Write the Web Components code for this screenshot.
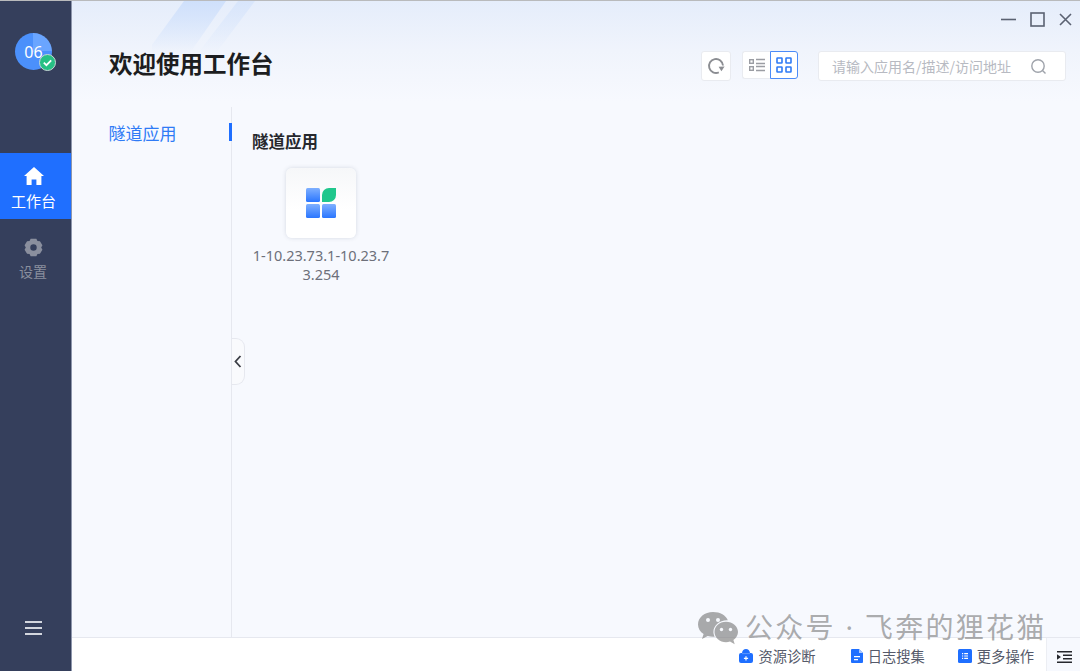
<!DOCTYPE html>
<html lang="zh">
<head>
<meta charset="utf-8">
<title>工作台</title>
<style>
	html,body{margin:0;height:100%;}
	body{font-family:"Noto Sans","Noto Sans CJK SC",sans-serif;overflow:hidden;}
</style>
</head>
<body>
<app-shell>
	<side-bar slot="side">
		<side-item active label="工作台">
			<svg viewBox="0 0 20 18" width="20" height="18"><path d="M10 0 L20 9 L17.4 9 L17.4 18 L12.4 18 L12.4 12.4 L7.6 12.4 L7.6 18 L2.6 18 L2.6 9 L0 9 Z" fill="#fff"/></svg>
		</side-item>
		<side-item label="设置">
			<svg viewBox="0 0 20 20" width="19" height="19"><path fill-rule="evenodd" d="M7 .8h6l1.2 2.3 2.6.2 2.6 4.4-1.3 2.3 1.3 2.3-2.6 4.4-2.6.2L13 19.2H7l-1.2-2.3-2.6-.2L.6 12.3 1.9 10 .6 7.7l2.6-4.4 2.6-.2zM10 6.6a3.4 3.4 0 1 0 0 6.8 3.4 3.4 0 0 0 0-6.8z" fill="#8a8f9e"/></svg>
		</side-item>
	</side-bar>
	<window-controls></window-controls>
	<work-header title-text="欢迎使用工作台"></work-header>
	<work-body>
		<nav-list slot="nav">隧道应用</nav-list>
		<app-section heading="隧道应用">
			<app-card>1-10.23.73.1-10.23.73.254</app-card>
		</app-section>
	</work-body>
	<status-bar>
		<status-link label="资源诊断">
			<svg viewBox="0 0 14 14" width="14" height="14"><path d="M3 4 C3.300 1.300 4.800 0 7 0 s3.700 1.300 4 4 H12 a2 2 0 0 1 2 2 v6 a2 2 0 0 1-2 2 H2 a2 2 0 0 1-2-2 V6 a2 2 0 0 1 2-2z" fill="#1f6fff"/><path d="M3 4.600h8" stroke="#6da2ff" stroke-width=".8"/><path d="M6.400 7.200h1.200v1.500h1.500v1.200H7.600v1.500H6.400V9.900H4.900V8.700h1.500z" fill="#fff"/></svg>
		</status-link>
		<status-link label="日志搜集" style="margin-left:35px">
			<svg viewBox="0 0 12 14" width="12" height="14"><path d="M1 0h7l4 4v9a1 1 0 0 1-1 1H1a1 1 0 0 1-1-1V1a1 1 0 0 1 1-1z" fill="#1f6fff"/><path d="M8 0l4 4H8z" fill="#a9c8ff"/><path d="M3 7h6v1.200H3zM3 10h4v1.200H3z" fill="#fff"/></svg>
		</status-link>
		<status-link label="更多操作" style="margin-left:33px">
			<svg viewBox="0 0 14 14" width="14" height="14"><rect width="14" height="14" rx="1.500" fill="#1f6fff"/><path d="M4 4h1.200v1.200H4zM6.200 4H10v1.200H6.200zM4 6.400h1.200v1.200H4zM6.200 6.400H10v1.200H6.200zM4 8.800h1.200V10H4zM6.200 8.800H10V10H6.200z" fill="#fff"/></svg>
		</status-link>
	</status-bar>
	<water-mark></water-mark>
</app-shell>

<script>
class AppShell extends HTMLElement{
	constructor(){
		super();
		const shadow = this.attachShadow({mode:'open'});
		shadow.innerHTML = `
		<style>
			:host{
				display:grid;
				grid-template-columns:72px 1fr;
				height:671px;
				width:1080px;
				position:relative;
				box-sizing:border-box;
				border-top:1px solid #b9babc;
				overflow:hidden;
			}
			.main{
				display:flex;
				flex-direction:column;
				min-width:0;
				position:relative;
				background:linear-gradient(180deg,#e5edfb 0,#f0f4fc 50px,#f7f9fe 100px,#f7f9fe 100%);
			}
			.streak{position:absolute;left:80px;top:0;}
		</style>
		<slot name="side"></slot>
		<div class="main">
			<svg class="streak" width="120" height="60" viewBox="0 0 120 60">
				<defs>
					<linearGradient id="fade" x1="0" y1="0" x2="0" y2="1">
						<stop offset="0" stop-color="#cfe0fb"/>
						<stop offset="1" stop-color="#cfe0fb" stop-opacity="0"/>
					</linearGradient>
				</defs>
				<polygon points="32,0 74,0 38,52 -6,52" fill="url(#fade)"/>
				<polygon points="86,0 103,0 64,52 46,52" fill="url(#fade)" opacity=".6"/>
			</svg>
			<slot></slot>
		</div>`;
	}
}
customElements.define('app-shell',AppShell);

class SideBar extends HTMLElement{
	constructor(){
		super();
		const shadow = this.attachShadow({mode:'open'});
		shadow.innerHTML = `
		<style>
			:host{
				display:flex;
				flex-direction:column;
				box-sizing:border-box;
				background:#353f5c;
				border-right:1px solid #8e96ac;
				padding-top:32px;
				height:670px;
			}
			.avatar{
				position:relative;
				width:37px;
				height:37px;
				margin:0 0 83px 15px;
				border-radius:50%;
				background:conic-gradient(#6aa5ff 0 25%,#4b90fb 25% 100%);
				color:#fff;
				font-size:16px;
				display:flex;
				align-items:center;
				justify-content:center;
			}
			.badge{position:absolute;right:-4px;bottom:-1px;}
			.menu{
				margin-top:auto;
				margin-bottom:36px;
				margin-left:25px;
				width:17px;
				display:flex;
				flex-direction:column;
				gap:4px;
			}
			.menu i{display:block;height:2px;background:#d3d6de;}
		</style>
		<div class="avatar"><span>06</span>
			<svg class="badge" width="17" height="17" viewBox="0 0 17 17">
				<circle cx="8.500" cy="8.500" r="8" fill="#27c084" stroke="#c9d6d6" stroke-width="1"/>
				<path d="M4.800 8.700l2.600 2.500 4.800-4.800" fill="none" stroke="#fff" stroke-width="1.800"/>
			</svg>
		</div>
		<slot></slot>
		<div class="menu"><i></i><i></i><i></i></div>`;
	}
}
customElements.define('side-bar',SideBar);

class SideItem extends HTMLElement{
	constructor(){
		super();
		const shadow = this.attachShadow({mode:'open'});
		shadow.innerHTML = `
		<style>
			:host{
				display:flex;
				flex-direction:column;
				align-items:center;
				box-sizing:border-box;
				height:66px;
				padding:18px 5px 0 0;
				color:#8a8f9e;
				font-size:14px;
				line-height:20px;
			}
			:host([active]){background:#1f6fff;color:#fff;font-size:15px;padding:13px 4px 0 0;}
			.icon{height:20px;display:flex;align-items:center;margin-bottom:5px;}
		</style>
		<div class="icon"><slot></slot></div>
		<div class="label"></div>`;
		shadow.querySelector('.label').textContent = this.getAttribute('label');
	}
}
customElements.define('side-item',SideItem);

class WindowControls extends HTMLElement{
	constructor(){
		super();
		const shadow = this.attachShadow({mode:'open'});
		shadow.innerHTML = `
		<style>
			:host{
				display:flex;
				justify-content:flex-end;
				align-items:center;
				gap:14px;
				height:36px;
				padding-right:8px;
				position:relative;
			}
			svg{display:block;}
		</style>
		<svg width="15" height="15" viewBox="0 0 15 15"><path d="M0 7.500h15" stroke="#5b6272" stroke-width="1.600"/></svg>
		<svg width="15" height="15" viewBox="0 0 15 15"><rect x="1" y="1" width="13" height="13" fill="none" stroke="#5b6272" stroke-width="1.600"/></svg>
		<svg width="13" height="15" viewBox="0 0 13 15"><path d="M1 2l11 11M12 2L1 13" stroke="#5b6272" stroke-width="1.600"/></svg>`;
	}
}
customElements.define('window-controls',WindowControls);

class WorkHeader extends HTMLElement{
	constructor(){
		super();
		const shadow = this.attachShadow({mode:'open'});
		shadow.innerHTML = `
		<style>
			:host{
				display:flex;
				align-items:flex-start;
				box-sizing:border-box;
				height:70px;
				padding:14px 14px 0 37px;
				position:relative;
			}
			h1{
				margin:-3px 0 0;
				flex:1;
				font-size:23.500px;
				line-height:30px;
				font-weight:700;
				color:#1c1d20;
				font-family:"Noto Sans CJK SC",sans-serif;
			}
			.btn{
				box-sizing:border-box;
				height:30px;
				background:#fff;
				border:1px solid #e9ebf0;
				border-radius:3px;
				display:flex;
				align-items:center;
				justify-content:center;
			}
			.refresh{width:30px;margin-right:11px;}
			.toggle{display:flex;margin-right:20px;height:28px;}
			.toggle div{
				box-sizing:border-box;
				width:28px;
				height:28px;
				background:#fff;
				border:1px solid #e9ebf0;
				display:flex;
				align-items:center;
				justify-content:center;
			}
			.toggle .list{border-radius:3px 0 0 3px;border-right:0;}
			.toggle .grid{border:1px solid #4b8bf8;border-radius:0 3px 3px 0;}
			.search{
				width:248px;
				justify-content:space-between;
				padding:0 19px 0 13px;
				font-size:14px;
				color:#b7bac2;
				font-family:"Noto Sans CJK SC",sans-serif;
			}
		</style>
		<h1></h1>
		<div class="btn refresh">
			<svg width="18" height="18" viewBox="0 0 18 18" fill="none"><path d="M16 8.500A7 7 0 1 0 11.800 15.400" stroke="#8b8d92" stroke-width="1.900"/><path d="M17.600 9.400l-6 .4 2.800 4.400z" fill="#8b8d92"/></svg>
		</div>
		<div class="toggle">
			<div class="list">
				<svg width="16" height="14" viewBox="0 0 16 14" fill="none" stroke="#9b9da3" stroke-width="1.400"><rect x=".7" y="1.700" width="3.600" height="3.600"/><rect x=".7" y="8.700" width="3.600" height="3.600"/><path d="M7 1.500h9M7 5.500h9M7 8.500h9M7 12.500h9"/></svg>
			</div>
			<div class="grid">
				<svg width="16" height="16" viewBox="0 0 16 16" fill="none" stroke="#2f7bf6" stroke-width="1.600"><rect x="1" y="1" width="5" height="5" rx=".5"/><rect x="10" y="1" width="5" height="5" rx=".5"/><rect x="1" y="10" width="5" height="5" rx=".5"/><rect x="10" y="10" width="5" height="5" rx=".5"/></svg>
			</div>
		</div>
		<div class="btn search">
			<span>请输入应用名/描述/访问地址</span>
			<svg width="15" height="15" viewBox="0 0 15 15" fill="none" stroke="#9fa3ab" stroke-width="1.400"><circle cx="7" cy="7" r="6.200"/><path d="M11.500 11.500l3 3"/></svg>
		</div>`;
		shadow.querySelector('h1').textContent = this.getAttribute('title-text');
	}
}
customElements.define('work-header',WorkHeader);

class WorkBody extends HTMLElement{
	constructor(){
		super();
		const shadow = this.attachShadow({mode:'open'});
		shadow.innerHTML = `
		<style>
			:host{
				display:flex;
				flex:1;
				min-height:0;
				position:relative;
			}
			.handle{
				position:absolute;
				left:160px;
				top:231px;
				width:13px;
				height:47px;
				box-sizing:border-box;
				background:#f9fafd;
				border:1px solid #e6e8ef;
				border-left:0;
				border-radius:0 9px 9px 0;
				display:flex;
				align-items:center;
				justify-content:center;
			}
		</style>
		<slot name="nav"></slot>
		<slot></slot>
		<div class="handle">
			<svg width="8" height="13" viewBox="0 0 8 13" fill="none"><path d="M6.500 1L1.500 6.500l5 5.500" stroke="#3a3d45" stroke-width="1.800"/></svg>
		</div>`;
	}
}
customElements.define('work-body',WorkBody);

class NavList extends HTMLElement{
	constructor(){
		super();
		const shadow = this.attachShadow({mode:'open'});
		shadow.innerHTML = `
		<style>
			:host{
				display:block;
				box-sizing:border-box;
				width:160px;
				flex:none;
				padding:16px 0 0 36.500px;
				border-right:1px solid #e6e8ef;
				position:relative;
				color:#2f7bf6;
				font-size:17px;
				line-height:20px;
				font-family:"Noto Sans CJK SC",sans-serif;
			}
			.bar{
				position:absolute;
				right:-1px;
				top:16px;
				width:3px;
				height:18px;
				background:#1f6fff;
			}
		</style>
		<slot></slot>
		<div class="bar"></div>`;
	}
}
customElements.define('nav-list',NavList);

class AppSection extends HTMLElement{
	constructor(){
		super();
		const shadow = this.attachShadow({mode:'open'});
		shadow.innerHTML = `
		<style>
			:host{
				display:block;
				padding:24px 0 0 19px;
			}
			h2{
				margin:0 0 17px;
				font-size:16.500px;
				line-height:20px;
				font-weight:700;
				color:#26282d;
				font-family:"Noto Sans CJK SC",sans-serif;
				padding-left:1px;
			}
		</style>
		<h2></h2>
		<slot></slot>`;
		shadow.querySelector('h2').textContent = this.getAttribute('heading');
	}
}
customElements.define('app-section',AppSection);

class AppCard extends HTMLElement{
	constructor(){
		super();
		const shadow = this.attachShadow({mode:'open'});
		shadow.innerHTML = `
		<style>
			:host{
				display:flex;
				flex-direction:column;
				align-items:center;
				width:140px;
			}
			.tile{
				width:70px;
				height:70px;
				border-radius:6px;
				background:linear-gradient(180deg,#f6f7f9,#fff 60%);
				box-shadow:0 0 4px rgba(60,70,100,.18);
				display:flex;
				align-items:center;
				justify-content:center;
			}
			.name{
				margin-top:8px;
				width:140px;
				text-align:center;
				word-break:break-all;
				font-size:14.500px;
				line-height:19px;
				color:#6d707a;
			}
		</style>
		<div class="tile">
			<svg width="30" height="30" viewBox="0 0 30 30">
				<defs>
					<linearGradient id="blue" x1="0" y1="0" x2="0" y2="1">
						<stop offset="0" stop-color="#7fb0ff"/>
						<stop offset="1" stop-color="#2a76ff"/>
					</linearGradient>
				</defs>
				<rect x="0" y="0" width="14" height="14" rx="1.500" fill="url(#blue)"/>
				<path d="M16 14V7a7 7 0 0 1 7-7h7v7a7 7 0 0 1-7 7z" fill="#20c78c"/>
				<rect x="0" y="16" width="14" height="14" rx="1.500" fill="url(#blue)"/>
				<rect x="16" y="16" width="14" height="14" rx="1.500" fill="url(#blue)"/>
			</svg>
		</div>
		<div class="name"><slot></slot></div>`;
	}
}
customElements.define('app-card',AppCard);

class StatusBar extends HTMLElement{
	constructor(){
		super();
		const shadow = this.attachShadow({mode:'open'});
		shadow.innerHTML = `
		<style>
			:host{
				display:flex;
				align-items:center;
				justify-content:flex-end;
				box-sizing:border-box;
				height:34px;
				background:#fff;
				border-top:1px solid #e6e8ef;
			}
			.fold{
				margin-left:12px;
				width:34px;
				height:33px;
				box-sizing:border-box;
				background:#f7f9fe;
				border-left:1px solid #eceef3;
				display:flex;
				align-items:center;
				justify-content:center;
				padding-top:4px;
				padding-left:1px;
			}
		</style>
		<slot></slot>
		<div class="fold">
			<svg width="15" height="12" viewBox="0 0 15 12"><path d="M0 0h15v1.500H0zM6 3.500h9V5H6zM6 7h9v1.500H6zM0 10.500h15V12H0zM0 3.300L4 6 0 8.700z" fill="#26282d"/></svg>
		</div>`;
	}
}
customElements.define('status-bar',StatusBar);

class StatusLink extends HTMLElement{
	constructor(){
		super();
		const shadow = this.attachShadow({mode:'open'});
		shadow.innerHTML = `
		<style>
			:host{
				display:flex;
				align-items:center;
				gap:5px;
				font-size:14.300px;
				line-height:20px;
				color:#555a6a;
				font-family:"Noto Sans CJK SC",sans-serif;
				padding-top:2px;
			}
			.ic{display:flex;}
		</style>
		<span class="ic"><slot></slot></span>
		<span class="label"></span>`;
		shadow.querySelector('.label').textContent = this.getAttribute('label');
	}
}
customElements.define('status-link',StatusLink);

class WaterMark extends HTMLElement{
	constructor(){
		super();
		const shadow = this.attachShadow({mode:'open'});
		shadow.innerHTML = `
		<style>
			:host{
				position:absolute;
				left:626px;
				top:607px;
				display:flex;
				align-items:center;
				gap:7px;
				color:rgba(120,120,120,.62);
				font-size:28px;
				line-height:36px;
				letter-spacing:2.300px;
				white-space:nowrap;
				font-family:"Noto Sans","Noto Sans CJK SC",sans-serif;
			}
			svg{margin-top:4px;}
		</style>
		<svg width="40" height="33" viewBox="0 0 40 33">
			<path d="M15 0C6.700 0 0 5.500 0 12.400c0 3.900 2.200 7.300 5.600 9.600L4 27l5.700-3c1.600.5 3.400.8 5.300.8.600 0 1.100 0 1.700-.1C15.800 23 15.400 21.400 15.400 20c0-6.500 6-11.700 13.500-11.700.3 0 .6 0 .9 0C28.100 3.500 22.100 0 15 0z" fill="rgba(120,120,120,.62)"/>
			<path d="M40 20c0-5.700-5.400-10.200-12-10.200S16.500 14.300 16.500 20s5.400 10.200 11.500 10.200c1.400 0 2.800-.2 4-.6l4.700 2.700-1.300-4.200C38 26 40 23.200 40 20z" fill="rgba(120,120,120,.62)"/>
			<circle cx="10" cy="8" r="2" fill="#f7f9fe"/><circle cx="20" cy="8" r="2" fill="#f7f9fe"/>
			<circle cx="23.500" cy="17.500" r="1.700" fill="#f7f9fe"/><circle cx="32.500" cy="17.500" r="1.700" fill="#f7f9fe"/>
		</svg>
		<span>公众号 · 飞奔的狸花猫</span>`;
	}
}
customElements.define('water-mark',WaterMark);
</script>
</body>
</html>
